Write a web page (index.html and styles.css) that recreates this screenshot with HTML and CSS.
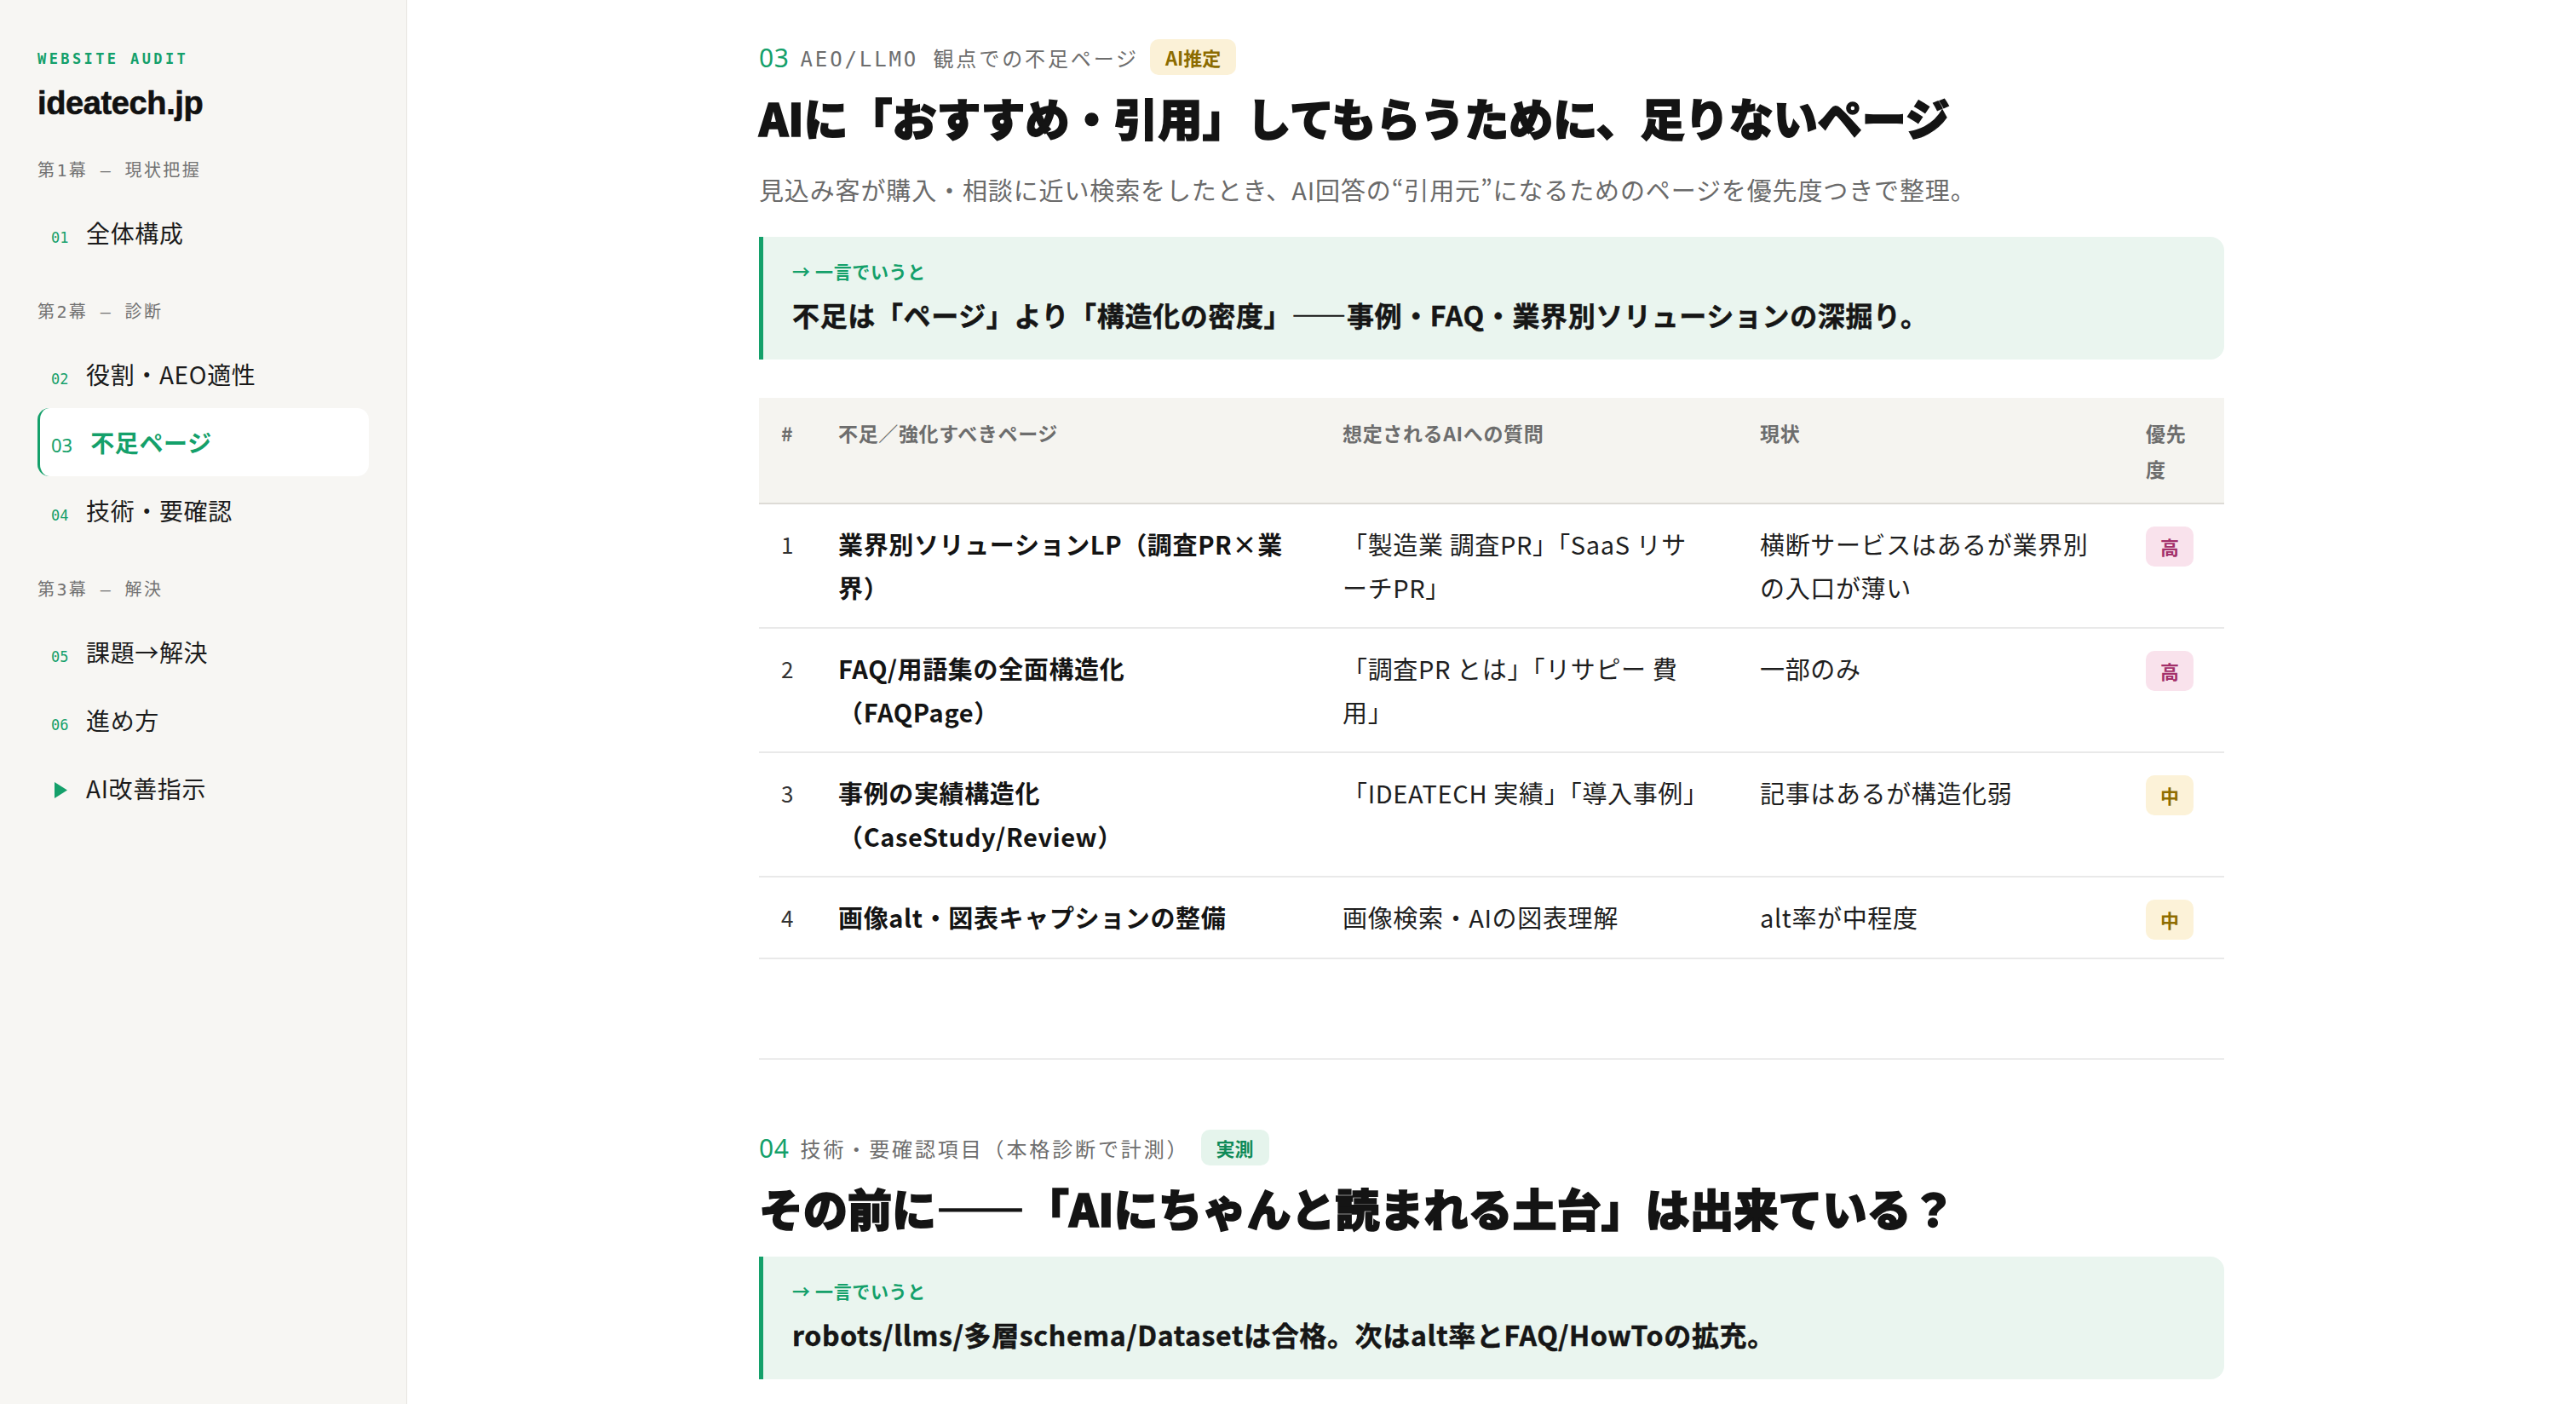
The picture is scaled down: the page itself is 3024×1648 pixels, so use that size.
FILE: index.html
```html
<!DOCTYPE html>
<html lang="ja">
<head>
    <meta charset="UTF-8">
    <meta name="viewport" content="width=device-width, initial-scale=1.0">
    <title>ideatech.jp — Website Audit</title>
    <link rel="stylesheet" href="styles.css">
</head>
<body>
    <div class="layout">
        <aside class="sidebar">
            <p class="brand-kicker">WEBSITE AUDIT</p>
            <p class="brand-name">ideatech.jp</p>

            <nav class="toc">
                <p class="toc-act">第1幕 — 現状把握</p>
                <a class="toc-item" href="#s01"><span class="toc-num">01</span>全体構成</a>

                <p class="toc-act">第2幕 — 診断</p>
                <a class="toc-item" href="#s02"><span class="toc-num">02</span>役割・AEO適性</a>
                <a class="toc-item is-active" href="#s03"><span class="toc-num">03</span>不足ページ</a>
                <a class="toc-item" href="#s04"><span class="toc-num">04</span>技術・要確認</a>

                <p class="toc-act">第3幕 — 解決</p>
                <a class="toc-item" href="#s05"><span class="toc-num">05</span>課題→解決</a>
                <a class="toc-item" href="#s06"><span class="toc-num">06</span>進め方</a>
                <a class="toc-item" href="#prompt">
                    <span class="toc-num toc-play">
                        <svg width="15" height="19" viewBox="0 0 15 19"><polygon points="0,0 15,9.5 0,19" fill="#14a06a"/></svg>
                    </span>AI改善指示
                </a>
            </nav>
        </aside>

        <main class="main">
            <div class="content">
                <section class="section" id="s03">
                    <div class="eyebrow">
                        <span class="eyebrow-num">03</span>
                        <span class="eyebrow-text">AEO/LLMO 観点での不足ページ</span>
                        <span class="tag tag-est">AI推定</span>
                    </div>
                    <h2 class="title">AIに「おすすめ・引用」してもらうために、足りないページ</h2>
                    <p class="lead">見込み客が購入・相談に近い検索をしたとき、AI回答の“引用元”になるためのページを優先度つきで整理。</p>

                    <div class="callout">
                        <p class="callout-label">→ 一言でいうと</p>
                        <p class="callout-text">不足は「ページ」より「構造化の密度」——事例・FAQ・業界別ソリューションの深掘り。</p>
                    </div>

                    <table class="gap-table">
                        <colgroup>
                            <col style="width: 67px">
                            <col style="width: 592px">
                            <col style="width: 490px">
                            <col style="width: 453px">
                            <col style="width: 118px">
                        </colgroup>
                        <thead>
                            <tr>
                                <th>#</th>
                                <th>不足／強化すべきページ</th>
                                <th>想定されるAIへの質問</th>
                                <th>現状</th>
                                <th>優先度</th>
                            </tr>
                        </thead>
                        <tbody>
                            <tr>
                                <td class="num">1</td>
                                <td class="page">業界別ソリューションLP（調査PR×業界）</td>
                                <td class="query">「製造業 調査PR」「SaaS リサーチPR」</td>
                                <td>横断サービスはあるが業界別の入口が薄い</td>
                                <td><span class="prio prio-high">高</span></td>
                            </tr>
                            <tr>
                                <td class="num">2</td>
                                <td class="page">FAQ/用語集の全面構造化<span class="schema">（FAQPage）</span></td>
                                <td class="query">「調査PR とは」「リサピー 費用」</td>
                                <td>一部のみ</td>
                                <td><span class="prio prio-high">高</span></td>
                            </tr>
                            <tr>
                                <td class="num">3</td>
                                <td class="page">事例の実績構造化<span class="schema">（CaseStudy/Review）</span></td>
                                <td class="query">「IDEATECH 実績」「導入事例」</td>
                                <td>記事はあるが構造化弱</td>
                                <td><span class="prio prio-mid">中</span></td>
                            </tr>
                            <tr>
                                <td class="num">4</td>
                                <td class="page">画像alt・図表キャプションの整備</td>
                                <td class="query">画像検索・AIの図表理解</td>
                                <td>alt率が中程度</td>
                                <td><span class="prio prio-mid">中</span></td>
                            </tr>
                        </tbody>
                    </table>
                </section>

                <section class="section" id="s04">
                    <div class="eyebrow">
                        <span class="eyebrow-num">04</span>
                        <span class="eyebrow-text">技術・要確認項目（本格診断で計測）</span>
                        <span class="tag tag-real">実測</span>
                    </div>
                    <h2 class="title">その前に——「AIにちゃんと読まれる土台」は出来ている？</h2>

                    <div class="callout">
                        <p class="callout-label">→ 一言でいうと</p>
                        <p class="callout-text">robots/llms/多層schema/Datasetは合格。次はalt率とFAQ/HowToの拡充。</p>
                    </div>
                </section>
            </div>
        </main>
    </div>
</body>
</html>
```

FILE: styles.css
```css
* {
    margin: 0;
    padding: 0;
    box-sizing: border-box;
}

body {
    font-family: "Noto Sans CJK JP", "Noto Sans", sans-serif;
    color: #1b1b1b;
    background: #ffffff;
    letter-spacing: 0.04em;
}

.layout {
    display: flex;
    min-height: 100vh;
}

/* ---------- sidebar ---------- */

.sidebar {
    flex: 0 0 478px;
    min-height: 100vh;
    padding: 57px 44px 56px;
    background: #f7f6f3;
    border-right: 1px solid #e7e5e0;
}

.brand-kicker {
    font-family: "DejaVu Sans Mono", monospace;
    font-size: 17px;
    line-height: 24px;
    font-weight: 700;
    letter-spacing: 0.2em;
    color: #14a06a;
}

.brand-name {
    margin-top: 18px;
    font-family: "Liberation Sans", "Noto Sans CJK JP", sans-serif;
    font-size: 38px;
    line-height: 44px;
    font-weight: 700;
    letter-spacing: -0.01em;
    color: #111;
    -webkit-text-stroke: 0.6px #111;
}

.toc-act {
    margin: 39px 0 19px;
    font-family: "DejaVu Sans Mono", "Noto Sans CJK JP", monospace;
    font-size: 20px;
    line-height: 28px;
    letter-spacing: 0.12em;
    color: #727272;
}

.toc-act:first-child {
    margin-top: 43px;
}

.toc-item {
    display: flex;
    align-items: baseline;
    height: 80px;
    padding: 20px 16px 20px 13px;
    border-left: 3px solid transparent;
    border-radius: 14px;
    font-size: 28px;
    line-height: 40px;
    color: #1b1b1b;
    text-decoration: none;
}

.toc-num {
    flex: 0 0 auto;
    width: 21px;
    margin-right: 20px;
    font-family: "DejaVu Sans Mono", monospace;
    font-size: 17px;
    letter-spacing: 0;
    color: #14a06a;
}

.toc-play {
    padding-left: 4px;
}

.toc-play svg {
    display: inline-block;
    vertical-align: baseline;
}

.toc-item.is-active {
    background: #ffffff;
    border-left-color: #14a06a;
    color: #14a06a;
    font-weight: 700;
}

.toc-item.is-active .toc-num {
    width: auto;
    margin-right: 21px;
    font-family: "Noto Sans", sans-serif;
    font-size: 22px;
    font-weight: 400;
}

/* ---------- main ---------- */

.main {
    flex: 1;
    padding: 46px 0 80px;
}

.content {
    max-width: 1720px;
    margin: 0 auto;
}

.section {
    padding-bottom: 116px;
    border-bottom: 2px solid #ececec;
}

.section + .section {
    padding-top: 82px;
    border-bottom: none;
}

.eyebrow {
    display: flex;
    align-items: center;
    gap: 13px;
    height: 42px;
}

.eyebrow-num {
    font-family: "Noto Sans", sans-serif;
    font-size: 30px;
    letter-spacing: 0.02em;
    color: #14a06a;
}

.eyebrow-text {
    font-family: "DejaVu Sans Mono", "Noto Sans CJK JP", monospace;
    font-size: 24px;
    letter-spacing: 0.12em;
    color: #6e6e6e;
}

.tag {
    display: inline-block;
    height: 42px;
    padding: 0 18px;
    border-radius: 10px;
    font-size: 22px;
    line-height: 42px;
    font-weight: 700;
    letter-spacing: 0;
}

.tag-est {
    background: #fbf1d7;
    color: #8c6b00;
}

.tag-real {
    background: #e5f4ec;
    color: #0f8a58;
}

.title {
    margin-top: 14px;
    font-size: 52px;
    line-height: 72px;
    font-weight: 900;
    letter-spacing: 0;
    color: #141414;
    -webkit-text-stroke: 1.6px #141414;
}

.lead {
    margin-top: 25px;
    font-size: 29px;
    line-height: 46px;
    letter-spacing: 0.03em;
    color: #6a6a6a;
}

.callout {
    margin-top: 33px;
    padding: 25px 34px 30px;
    background: #eaf5ef;
    border-left: 5px solid #14a06a;
    border-radius: 0 16px 16px 0;
}

.title + .callout {
    margin-top: 21px;
}

.callout-label {
    font-size: 21px;
    line-height: 30px;
    font-weight: 700;
    color: #14a06a;
}

.callout-text {
    margin-top: 13px;
    font-size: 32px;
    line-height: 46px;
    font-weight: 700;
    color: #161616;
    -webkit-text-stroke: 0.5px #161616;
}

/* ---------- gap table ---------- */

.gap-table {
    width: 100%;
    margin-top: 45px;
    table-layout: fixed;
    border-collapse: collapse;
}

.gap-table th {
    padding: 20px 26px 19px;
    background: #f5f4f0;
    border-bottom: 2px solid #dddbd6;
    font-size: 23px;
    line-height: 42px;
    font-weight: 700;
    color: #6d6d6d;
    text-align: left;
    vertical-align: top;
}

.gap-table td {
    padding: 21px 26px;
    border-bottom: 2px solid #e9e9e9;
    font-size: 29px;
    line-height: 51px;
    color: #1e1e1e;
    vertical-align: top;
}

.gap-table td.num {
    font-size: 26px;
    color: #333;
}

.gap-table td.page {
    font-weight: 700;
    color: #141414;
}

.gap-table td.query {
    padding-right: 36px;
}

.schema {
    display: block;
}

.prio {
    display: inline-block;
    margin-top: 5px;
    padding: 0 17px;
    border-radius: 10px;
    font-size: 22px;
    line-height: 47px;
    font-weight: 700;
    letter-spacing: 0;
    vertical-align: top;
}

.prio-high {
    background: #f9e2ec;
    color: #a3306a;
}

.prio-mid {
    background: #fcf2d8;
    color: #8f6d00;
}
```
